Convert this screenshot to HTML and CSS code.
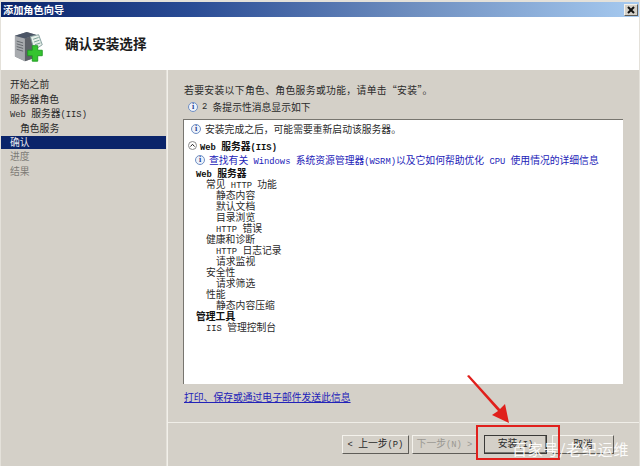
FILE: index.html
```html
<!DOCTYPE html>
<html lang="zh-CN">
<head>
<meta charset="utf-8">
<title>添加角色向导</title>
<link rel="stylesheet" href="styles.css">
</head>
<body>
<div class="window">
  <div class="titlebar">
    <span>添加角色向导</span>
    <span class="close">
      <svg width="8" height="8" viewBox="0 0 8 8"><path d="M1 1 L7 7 M7 1 L1 7" stroke="#111" stroke-width="2"/></svg>
    </span>
  </div>
  <header class="banner">
    <svg class="wizard-icon" width="31" height="33" viewBox="0 0 34 36">
      <path d="M1 5 L14 1 L24 4 L24 29 L12 33 L1 28 Z" fill="#8d9096"/>
      <path d="M1 5 L12 8 L12 33 L1 28 Z" fill="#a7aaae"/>
      <path d="M12 8 L24 4 L24 29 L12 33 Z" fill="#5d6168"/>
      <path d="M1 5 L14 1 L24 4 L12 8 Z" fill="#4b5566"/>
      <path d="M3 11 L10 13 M3 14 L10 16 M3 17 L10 19 M3 20 L10 22" stroke="#5f6368" stroke-width="1"/>
      <path d="M18 6 L27 4 L31 15 L22 21 Z" fill="#e8f0ea" stroke="#7f9a9a" stroke-width="1"/>
      <path d="M21 9 L27 7 M22 12 L28 10 M23 15 L29 13" stroke="#6f9a8f" stroke-width="1"/>
      <path d="M20 16 H26 V21 H31 V27 H26 V33 H20 V27 H15 V21 H20 Z" fill="#35c42f" stroke="#1f9a22" stroke-width="1"/>
    </svg>
    <h1 class="banner-title">确认安装选择</h1>
  </header>
  <div class="main">
    <nav class="steps">
      <div class="step">开始之前</div>
      <div class="step">服务器角色</div>
      <div class="step"><span class="lat">Web </span>服务器<span class="lat">(IIS)</span></div>
      <div class="step step-sub">角色服务</div>
      <div class="step step-active">确认</div>
      <div class="step step-off">进度</div>
      <div class="step step-off">结果</div>
    </nav>
    <section class="content">
      <div class="body">
        <p class="lead">若要安装以下角色、角色服务或功能，请单击“安装”。</p>
        <p class="note"><span class="info">i</span><span class="lat">2 </span>条提示性消息显示如下</p>
        <div class="report">
          <p class="report-note"><span class="info">i</span>安装完成之后，可能需要重新启动该服务器。</p>
          <div class="section-head"><span class="chevron">
            <svg width="9" height="9" viewBox="0 0 9 9"><circle cx="4.5" cy="4.5" r="4" fill="#fff" stroke="#8a8a8a"/><path d="M2.5 5.5 L4.5 3.3 L6.5 5.5" fill="none" stroke="#222" stroke-width="1"/></svg>
          </span><b><span class="lat">Web </span>服务器<span class="lat">(IIS)</span></b></div>
          <p class="report-link"><span class="info">i</span><span>查找有关<span class="lat"> Windows </span>系统资源管理器<span class="lat">(WSRM)</span>以及它如何帮助优化<span class="lat"> CPU </span>使用情况的详细信息</span></p>
          <ul class="tree">
            <li class="l0"><span class="lat">Web </span>服务器</li>
            <li class="l1">常见<span class="lat"> HTTP </span>功能</li>
            <li class="l2">静态内容</li>
            <li class="l2">默认文档</li>
            <li class="l2">目录浏览</li>
            <li class="l2"><span class="lat">HTTP </span>错误</li>
            <li class="l1">健康和诊断</li>
            <li class="l2"><span class="lat">HTTP </span>日志记录</li>
            <li class="l2">请求监视</li>
            <li class="l1">安全性</li>
            <li class="l2">请求筛选</li>
            <li class="l1">性能</li>
            <li class="l2">静态内容压缩</li>
            <li class="l0">管理工具</li>
            <li class="l1"><span class="lat">IIS </span>管理控制台</li>
          </ul>
        </div>
        <a class="print-link" href="#">打印、保存或通过电子邮件发送此信息</a>
      </div>
      <footer class="actions">
        <button class="btn btn-back" type="button"><span class="lat">&lt; </span>上一步<span class="lat">(P)</span></button>
        <button class="btn btn-off" type="button">下一步<span class="lat">(N) &gt;</span></button>
        <button class="btn btn-default" type="button">安装<span class="lat">(I)</span></button>
        <button class="btn btn-cancel" type="button">取消</button>
      </footer>
    </section>
  </div>
</div>
<svg class="arrow" width="44" height="50" viewBox="0 0 44 50">
  <path d="M0 1 L2 0 L33 34 L38 29 L42 48 L25 40 L31 36 Z" fill="#e0201c"/>
</svg>
<div class="callout"></div>
<div class="watermark">百家号/老纪运维</div>
</body>
</html>
```
FILE: styles.css
```css
* { box-sizing: border-box; }
html, body { margin: 0; padding: 0; }
body {
  position: relative;
  width: 640px;
  height: 466px;
  overflow: hidden;
  background: #d4d0c8;
  font-family: "Noto Sans CJK SC", "Liberation Sans", sans-serif;
  font-size: 9.8px;
  color: #2a2a2a;
}
p, h1, ul { margin: 0; padding: 0; }
.lat {
  font-family: "Liberation Mono", monospace;
  font-size: 8.8px;
  white-space: pre;
}
.window {
  display: flex;
  flex-direction: column;
  height: 466px;
  padding: 2px 1px 0 1px;
  background: #e4e1da;
}
.titlebar {
  flex: 0 0 15px;
  display: flex;
  align-items: center;
  justify-content: space-between;
  padding: 0 1px 0 2px;
  background: linear-gradient(90deg, #0a246a 0, #2a4c95 30%, #6f8fc0 65%, #a6caf0 100%);
  color: #fff;
  font-size: 10.2px;
  font-weight: 700;
  line-height: 15px;
}
.close {
  display: flex;
  align-items: center;
  justify-content: center;
  width: 14px;
  height: 12px;
  background: #d4d0c8;
  border: 1px solid;
  border-color: #f4f2ec #5f5d58 #5f5d58 #f4f2ec;
}
.banner {
  flex: 0 0 53px;
  display: flex;
  align-items: center;
  background: #fff;
  padding: 7px 0 0 13px;
}
.wizard-icon { flex: none; margin-right: 20px; }
.banner-title {
  font-size: 13.6px;
  font-weight: 700;
  color: #1c1c1c;
  line-height: 18px;
  padding-bottom: 8px;
}
.main { flex: 1; display: flex; min-height: 0; }
.steps {
  flex: 0 0 165px;
  padding-top: 7px;
  background: #d4d0c8;
}
.step {
  height: 14.5px;
  line-height: 14.5px;
  padding-left: 9px;
  white-space: nowrap;
}
.step-sub { padding-left: 19px; }
.step-active {
  background: #0a246a;
  color: #e8e8f0;
  height: 13px;
  line-height: 13px;
  margin: 1px 0 0;
}
.step-off { color: #7d7b76; }
.content {
  flex: 1;
  display: flex;
  flex-direction: column;
  margin-left: 1px;
  border-left: 1px solid #f2f0ea;
  background: #d4d0c8;
}
.body { flex: 0 0 352px; padding: 13px 0 0 15px; }
.lead { margin-left: 1px; line-height: 14px; letter-spacing: 0.35px; white-space: nowrap; }
.note {
  display: flex;
  align-items: center;
  height: 14px;
  margin: 3px 0 0 5px;
  white-space: pre;
}
.info {
  flex: none;
  display: inline-flex;
  align-items: center;
  justify-content: center;
  width: 10px;
  height: 10px;
  margin-right: 4px;
  border: 1px solid #6f8fc4;
  border-radius: 50%;
  background: #eef3fb;
  color: #24408f;
  font: 700 8px/1 "Liberation Serif", serif;
}
.report {
  width: 440px;
  height: 265px;
  margin: 5px 0 0;
  padding: 2px 0 0 7px;
  background: #fff;
  border-top: 1px solid #77756f;
  border-left: 1px solid #77756f;
  overflow: hidden;
}
.report-note { display: flex; align-items: center; height: 14px; white-space: nowrap; }
.section-head {
  display: flex;
  align-items: center;
  height: 15px;
  margin: 2px 0 0 -3px;
  white-space: nowrap;
  color: #111;
}
.chevron { display: flex; margin-right: 3px; }
.report-link {
  display: flex;
  align-items: center;
  height: 14px;
  margin-left: 4px;
  color: #2222b8;
  white-space: nowrap;
}
.tree { list-style: none; margin-top: 1px; }
.tree li { height: 11px; line-height: 11px; white-space: nowrap; }
.l0 { margin-left: 5px; font-weight: 700; color: #111; }
.l1 { margin-left: 15px; }
.l2 { margin-left: 25px; }
.print-link {
  display: block;
  margin: 6px 0 0 1px;
  color: #2222b8;
  line-height: 14px;
  text-decoration: underline;
  white-space: nowrap;
}
.actions {
  flex: 1;
  display: flex;
  align-items: flex-start;
  padding: 12px 0 0 174px;
  border-top: 1px solid #f0eee8;
}
.btn {
  width: 65px;
  height: 19px;
  padding: 0;
  background: #d4d0c8;
  border: 1px solid;
  border-color: #f4f2ec #5f5d58 #5f5d58 #f4f2ec;
  color: #2a2a2a;
  font: 9.8px/1 "Noto Sans CJK SC", "Liberation Sans", sans-serif;
}
.btn-back { width: 67px; margin-right: 3px; }
.btn-off { color: #9a9892; }
.btn-default {
  margin-left: 7px;
  width: 63px;
  border: 1px solid #3a3a38;
  box-shadow: inset -1px -1px 0 #77756f;
}
.btn-cancel { margin-left: 5px; width: 62px; }
.arrow { position: absolute; left: 467px; top: 375px; }
.callout {
  position: absolute;
  left: 476px;
  top: 425px;
  width: 84px;
  height: 35px;
  border: 2px solid #e0201c;
}
.watermark {
  position: absolute;
  left: 512px;
  top: 439px;
  color: #fff;
  font-size: 15px;
  line-height: 20px;
  letter-spacing: 0.8px;
  white-space: nowrap;
  opacity: 0.92;
}
```
